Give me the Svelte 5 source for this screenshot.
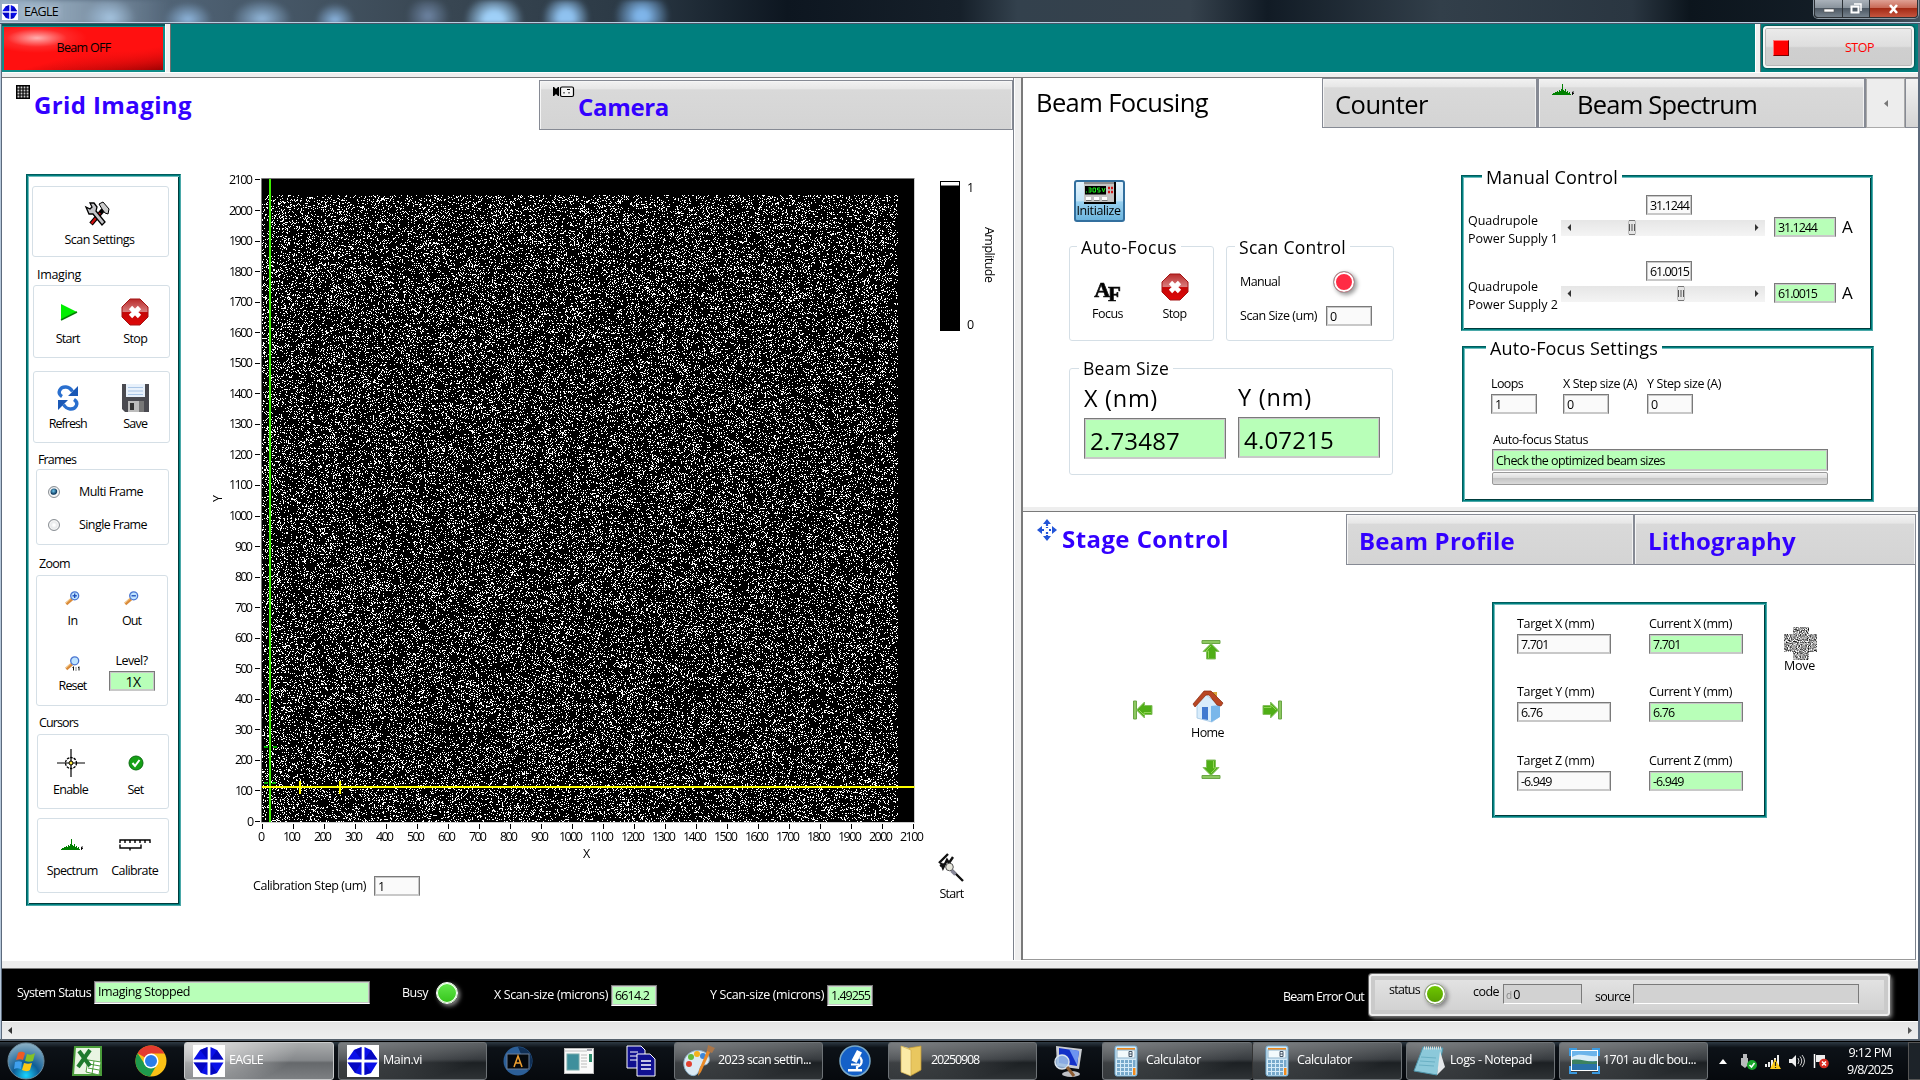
<script>
  import { onMount } from 'svelte';

  // Tightens or loosens tracking so a caption fills the given width.
  function fit(node, width) {
    if (!width) return;
    const style = getComputedStyle(node);
    const natural = node.getBoundingClientRect().width - parseFloat(style.paddingLeft) - parseFloat(style.paddingRight);
    node.style.letterSpacing = `${(width - natural) / node.textContent.length}px`;
  }

  let canvas;
  onMount(() => {
    const ctx = canvas.getContext('2d');
    const w = canvas.width;
    const h = canvas.height;
    ctx.fillStyle = '#000';
    ctx.fillRect(0, 0, w, h);
    let seed = 20250908;
    const rnd = () => {
      seed = (seed + 0x6d2b79f5) | 0;
      let r = Math.imul(seed ^ (seed >>> 15), 1 | seed);
      r = (r + Math.imul(r ^ (r >>> 7), 61 | r)) ^ r;
      return ((r ^ (r >>> 14)) >>> 0) / 4294967296;
    };
    ctx.fillStyle = '#fff';
    for (let y = 16; y < h; y++) {
      for (let x = 0; x < 636; x++) {
        if (rnd() < 0.17) ctx.fillRect(x, y, 1, 1);
      }
    }
  });

  const ticks = Array.from({ length: 22 }, (_, i) => i);
  const axes = ['X', 'Y', 'Z'];
  const stageValues = ['7.701', '6.76', '-6.949'];
  const supplies = [
    { n: 1, value: '31.1244', thumb: 67 },
    { n: 2, value: '61.0015', thumb: 116 },
  ];
</script>

{#snippet t(text, w, cls = '')}<span class="t {cls}" use:fit={w}>{text}</span>{/snippet}

{#snippet stopIcon()}
  <svg width="28" height="28" viewBox="0 0 28 28">
    <defs><linearGradient id="sg" x1="0" y1="0" x2="0" y2="1"><stop offset="0" stop-color="#b92a2a" /><stop offset=".5" stop-color="#d98080" /><stop offset=".52" stop-color="#c40808" /><stop offset="1" stop-color="#e00808" /></linearGradient></defs>
    <path d="M9 1h10l8 8v10l-8 8H9l-8-8V9z" fill="url(#sg)" stroke="#a31515" />
    <path d="M9.5 9.5l9 9M18.500 9.500l-9 9" stroke="#fff" stroke-width="4.600" />
  </svg>
{/snippet}

{#snippet eagle(s)}
  <svg width={s} height={s} viewBox="0 0 32 32">
    <rect width="32" height="32" fill="#fff" />
    <path d="M14.500 2v12.500H0.500L7 5zM17.500 2L24 5l6.500 9.500H17.500zM0.500 17.500h14V30L8 28zM17.500 17.500H30.500L24 28l-6.500 2z" fill="#0a10e8" />
    <path d="M14.500 2v12.500L7 5zM24 5l6.500 9.500H17.500zM0.500 17.500h14L8 28zM17.500 17.500L24 28l-6.500 2z" fill="#0000a8" opacity=".6" />
  </svg>
{/snippet}

{#snippet spectrum()}
  <svg width="22" height="12" viewBox="0 0 22 12">
    <path d="M0 11v-1h1v-1h2V8h2V7h1v1h1V6h1v1h1V5h1V0h1v6h1v1h1V5h1v3h1V7h1v2h1V8h1v2h1v1z" fill="#008000" />
    <path d="M20.500 11V8h1.500M20 9.500h2" stroke="#000" fill="none" stroke-width=".9" />
  </svg>
{/snippet}

{#snippet magnifier(kind)}
  <svg width="16" height="15" viewBox="0 0 16 15">
    <path d="M1.200 13L7 8" stroke="#d98a3a" stroke-width="3" /><path d="M1 12L6 7.500" stroke="#f6cf8c" />
    <circle cx="9.700" cy="4.800" r="4" fill="#bfe4ff" stroke="#4a74d0" stroke-width="1.300" />
    {#if kind !== 'reset'}<path d="M7.500 4.800h4.400" stroke="#1c48b8" stroke-width="1.300" />{/if}
    {#if kind === 'in'}<path d="M9.700 2.600v4.400" stroke="#1c48b8" stroke-width="1.300" />{/if}
    {#if kind === 'reset'}<path d="M8.500 10.500v4M7.500 11.500h1M11 11.500v1M11 13.500v1M14 10.500v4M13 11.500h1" stroke="#111" />{/if}
  </svg>
{/snippet}

{#snippet arrow(dir)}
  <svg width="22" height="22" viewBox="0 0 22 22" class="arr {dir}">
    <path d="M2 1.500h18v3H2z" fill="#8cc860" stroke="#6aa545" />
    <path d="M11 4.500l8 8h-3.500v7.500h-9v-7.500H3z" fill="#4fae16" stroke="#86bf60" /><path d="M11 7l-5 5h2.500v7" stroke="#8fd355" fill="none" />
  </svg>
{/snippet}

{#snippet calc()}
  <svg width="24" height="32" viewBox="0 0 24 32">
    <rect x="1" y="1" width="22" height="30" rx="2" fill="#d5ebf8" stroke="#6fa9cf" />
    <rect x="3" y="3" width="18" height="2" fill="#f08a1d" /><rect x="3" y="5" width="18" height="8" fill="#f3fafc" stroke="#8fb4cc" />
    <path d="M15 6.500h3v5h-3zM15 9h3" stroke="#456" fill="none" />
    {#each [16, 20, 24, 28] as y}{#each [3, 7, 11, 15] as x}<rect {x} y={y - 1} width="3" height="3" fill="#77a9cb" />{/each}{/each}
    <path d="M19 15h2.500v7H19z" fill="#77a9cb" /><path d="M19 23h2.500v7H19z" fill="#f08a1d" />
  </svg>
{/snippet}

<div class="screen">
  <header class="titlebar">
    <div class="blobs"></div>
    <div class="caption">{@render eagle(16)}{@render t('EAGLE', 34)}</div>
    <div class="winbtns">
      <span class="wb min"><svg width="14" height="12"><rect x="2" y="6" width="10" height="3" fill="#fff" stroke="#555" stroke-width=".6" /></svg></span>
      <span class="wb max"><svg width="14" height="13"><path d="M5 2h7v7" fill="none" stroke="#fff" stroke-width="1.500" /><rect x="2.500" y="4.500" width="7" height="6" fill="none" stroke="#fff" stroke-width="2" /></svg></span>
      <span class="wb close"><svg width="14" height="12"><path d="M3 2l7 8M10 2L3 10" stroke="#fff" stroke-width="2.600" /></svg></span>
    </div>
  </header>

  <div class="window">
    <div class="toolbar">
      <div class="off-cell"><button class="beam-off">{@render t('Beam OFF', 54)}</button></div>
      <i class="vsplit"></i>
      <div class="teal"></div>
      <i class="vsplit"></i>
      <div class="stop-cell"><button class="stop"><i></i>{@render t('STOP', 29)}</button></div>
    </div>
    <i class="hsplit"></i>

    <main>
      <section class="left">
        <div class="tabs">
          <div class="tab active gi">
            <svg width="14" height="14" viewBox="0 0 14 14"><path d="M.75.750h12.500v12.500H.750z" fill="#ccc" stroke="#000" stroke-width="1.500" /><path d="M4 0v14M7 0v14M10 0v14M0 4h14M0 7h14M0 10h14" stroke="#000" stroke-width="1.200" /></svg>
            {@render t('Grid Imaging', 158, 'big')}
          </div>
          <div class="tab cam">
            <svg width="22" height="12" viewBox="0 0 22 12"><path d="M0 1h1l2 2 2-2h1v9H5L3 8l-2 2H0z" fill="#000" /><rect x="7.500" y="1" width="13" height="9.500" rx="1.500" fill="#f4f4f4" stroke="#000" stroke-width="1.200" /><path d="M11 6v1.500M14 3.500h3M16 6v1.500" stroke="#000" /></svg>
            {@render t('Camera', 91, 'big')}
          </div>
        </div>
        <div class="left-body">
          <aside class="teal-box side">
            <div class="box b1">
              <svg width="26" height="26" viewBox="0 0 26 26"><path d="M6 23L18 9" stroke="#000" stroke-width="4.500" /><path d="M6.500 22.500L15 12" stroke="#d01010" stroke-width="2.400" /><path d="M14 3l4-2 6 7-1 5-3-1-3-4z" fill="#ccc" stroke="#000" /><path d="M1 6l4 2 2-2-2-4 4 0 3 4-1 4 9 11-3 3-9-11-4 0z" fill="#c4c4c8" stroke="#000" stroke-width="1.300" /></svg>
              {@render t('Scan Settings', 70)}
            </div>
            <div class="cap c1">{@render t('Imaging', 44)}</div>
            <div class="box b2">
              <div class="it"><span class="ic"><svg width="18" height="18" viewBox="0 0 18 18"><path d="M2 1v16l16-8z" fill="#00ef00" /><path d="M2 17L18 9" stroke="#067a06" stroke-width="1.500" /></svg></span>{@render t('Start', 24)}</div>
              <div class="it"><span class="ic">{@render stopIcon()}</span>{@render t('Stop', 24)}</div>
            </div>
            <div class="box b3">
              <div class="it"><span class="ic"><svg width="22" height="28" viewBox="0 0 22 28"><g fill="none" stroke="#2a6fce" stroke-width="3.400"><path d="M5 12.500C-.5 9 3 2.500 9 3c3 .2 5 2 6.500 4.500" /><path d="M17 15.500c5.500 3.500 2 10-4 9.500-3-.2-5-2-6.500-4.500" /></g><path d="M21 2v10H11zM1 26V16h10z" fill="#1a58b6" /></svg></span>{@render t('Refresh', 38)}</div>
              <div class="it"><span class="ic"><svg width="29" height="30" viewBox="0 0 29 30"><path d="M1 1h27v28H4l-3-3z" fill="#4a4a50" /><path d="M5 1h19v13H5z" fill="#e8f1fb" /><path d="M7 4.500h15M7 8h15M7 11.500h15" stroke="#aac6e6" stroke-width="1.200" /><path d="M7 18h16v11H7z" fill="#bcbcbc" /><path d="M9 20h4v7H9z" fill="#333" /><path d="M18 18h5v11h-5z" fill="#777" /></svg></span>{@render t('Save', 24)}</div>
            </div>
            <div class="cap c2">{@render t('Frames', 38)}</div>
            <div class="box b4">
              <div class="radio"><i class="on"></i>{@render t('Multi Frame', 64)}</div>
              <div class="radio r2"><i></i>{@render t('Single Frame', 68)}</div>
            </div>
            <div class="cap c3">{@render t('Zoom', 31)}</div>
            <div class="box b5">
              <div class="it"><span class="ic">{@render magnifier('in')}</span>{@render t('In', 10)}</div>
              <div class="it"><span class="ic">{@render magnifier('out')}</span>{@render t('Out', 19)}</div>
              <div class="it"><span class="ic">{@render magnifier('reset')}</span>{@render t('Reset', 28)}</div>
              <div class="it lv">{@render t('Level?', 32)}<span class="field green lvl">{@render t('1X', 15)}</span></div>
            </div>
            <div class="cap c4">{@render t('Cursors', 39)}</div>
            <div class="box b6">
              <div class="it"><span class="ic"><svg width="28" height="28" viewBox="0 0 28 28"><path d="M0 14h28M14 0v28" stroke="#000" stroke-width="1.200" /><circle cx="14" cy="14" r="5.500" fill="none" stroke="#000" stroke-width="1.300" stroke-dasharray="2.500 1" /><circle cx="14" cy="14" r="2" fill="#ffe93a" stroke="#000" /></svg></span>{@render t('Enable', 35)}</div>
              <div class="it"><span class="ic"><svg width="16" height="16" viewBox="0 0 16 16"><circle cx="8" cy="8" r="7" fill="#15a015" stroke="#0a6d10" /><path d="M4.500 8l2.500 3 4.500-6" fill="none" stroke="#fff" stroke-width="2" /></svg></span>{@render t('Set', 16)}</div>
            </div>
            <div class="box b7">
              <div class="it"><span class="ic">{@render spectrum()}</span>{@render t('Spectrum', 51)}</div>
              <div class="it"><span class="ic"><svg width="32" height="12" viewBox="0 0 32 12"><path d="M1 4V1h30v3M6 1v3M11 1v3M16 1v3M21 1v3M26 1v3M1 5.500V9h21V5.500M11 9v2.500" fill="none" stroke="#000" stroke-width="1.400" /></svg></span>{@render t('Calibrate', 47)}</div>
            </div>
          </aside>

          <div class="plot">
            <div class="stack">
              <canvas bind:this={canvas} width="653" height="643"></canvas>
              <svg width="810" height="692" viewBox="200 168 810 692">
                <path d="M261.500 822V178.500H914.500" fill="none" stroke="#777" />
                <path d="M261 822.500H915M914.500 179v643" fill="none" stroke="#ccc" />
                {#each ticks as i}
                  <path d="M255 {Math.round(821 - i * 30.55) + 0.5}h5M{Math.round(262 + i * 31) + 0.5} 824v5" stroke="#000" />
                  <text x={253 - (i === 0 ? 6 : i < 10 ? 18 : 24)} y={825.5 - i * 30.55} textLength={i === 0 ? 6 : i < 10 ? 18 : 24}>{i * 100}</text>
                  <text x={261 + i * 31 - (i === 0 ? 3 : i < 10 ? 9 : 12)} y="841" textLength={i === 0 ? 6 : i < 10 ? 18 : 24}>{i * 100}</text>
                {/each}
                <path d="M270 179v643" stroke="#3cf000" stroke-width="2" />
                <path d="M264 747h4M273 747h4M264 783h4M272 783h4" stroke="#00e000" stroke-width="1.500" />
                <path d="M262 787H914.500" stroke="#ff0" stroke-width="2" />
                <path d="M300 781v13M340 781v13" stroke="#ff0" stroke-width="2" />
                <text x="583" y="858" font-size="12">X</text>
                <text transform="translate(222 502) rotate(-90)" font-size="12">Y</text>
                <rect x="940" y="181" width="20" height="150" /><rect x="941" y="182" width="18" height="3.500" fill="#fff" />
                <text x="967" y="192">1</text><text x="967" y="329">0</text>
                <text transform="translate(985 227) rotate(90)" textLength="56">Amplitude</text>
              </svg>
            </div>
            <div class="under">
              {@render t('Calibration Step (um)', 113)}
              <span class="field calf">1</span>
              <div class="it st">
                <svg width="27" height="30" viewBox="0 0 27 30"><path d="M1 10l9-9M2 13l4-2M3 10l2 5 4-8 2 3 4-6M12 15l13 13" stroke="#111" stroke-width="2.400" fill="none" /><circle cx="11.500" cy="14" r="3.800" fill="#e6e6dc" stroke="#555" /><path d="M13.500 17.500l4 4" stroke="#889" stroke-width="3.500" /></svg>
                {@render t('Start', 24)}
              </div>
            </div>
          </div>
        </div>
      </section>
      <i class="msplit"></i>

      <section class="right">
        <div class="tabs rt">
          <div class="tab active bf">{@render t('Beam Focusing', 172, 'reg')}</div>
          <div class="tab co">{@render t('Counter', 93, 'reg')}</div>
          <div class="tab bs">{@render spectrum()}{@render t('Beam Spectrum', 180, 'reg')}</div>
          <div class="nav"><svg width="4" height="7"><path d="M4 0v7L0 3.500z" fill="#777" /></svg></div>
          <div class="stub"></div>
        </div>
        <div class="focus">
          <div class="fcol">
            <button class="init">
              <svg width="32" height="22" viewBox="0 0 32 22"><rect width="32" height="22" fill="#000" /><rect x="0" y="0" width="30" height="20" fill="#c4c4c4" /><path d="M0 1h30" stroke="#555" /><rect x="1" y="4" width="21" height="8.500" fill="#000" /><path d="M2 10h1M4.500 6h2.500v4H4.500M4.500 8h2M9 6h2.500v4H9zM16 6h-2.500v2H16v2h-2.500M18 6l1.500 4L21 6" stroke="#18f018" fill="none" /><path d="M24 6h2M27 6h2M24 10h2M27 10h2" stroke="#d01818" stroke-width="2.500" /><path d="M2 16.500h5M10 16.500h5M18 16.500h5" stroke="#fff" stroke-width="3" /><path d="M2 18.500h5.500M10 18.500h5.500M18 18.500h5.500" stroke="#777" /></svg>
              {@render t('Initialize', 44)}
            </button>
            <div class="groups">
              <div class="group af">
                {@render t('Auto-Focus', 96, 'legend')}
                <div class="row">
                  <div class="it"><span class="ic afi"><b>A</b><b>F</b></span>{@render t('Focus', 31)}</div>
                  <div class="it"><span class="ic">{@render stopIcon()}</span>{@render t('Stop', 24)}</div>
                </div>
              </div>
              <div class="group sc">
                {@render t('Scan Control', 107, 'legend')}
                <div class="man">{@render t('Manual', 40)}<i class="led red"></i></div>
                <div class="siz">{@render t('Scan Size (um)', 77)}<span class="field">0</span></div>
              </div>
            </div>
            <div class="group bz">
              {@render t('Beam Size', 86, 'legend')}
              <div class="sizes">
                <div>{@render t('X (nm)', 74, 'nm')}<span class="field green bigf">{@render t('2.73487', 90)}</span></div>
                <div class="y">{@render t('Y (nm)', 74, 'nm')}<span class="field green bigf">{@render t('4.07215', 90)}</span></div>
              </div>
            </div>
          </div>
          <div class="scol">
            <div class="teal-box manual">
              {@render t('Manual Control', 132, 'legend')}
              {#each supplies as s}
                <div class="quad">
                  <div class="ql">{@render t('Quadrupole', 70)}{@render t(`Power Supply ${s.n}`, 90)}</div>
                  <div class="qs">
                    <span class="field">{@render t(s.value, 39)}</span>
                    <div class="slider">
                      <svg width="204" height="16">
                        <path d="M10 4v7L6.500 7.500zM194 4v7l3.500-3.500z" fill="#333" />
                        <g transform="translate({s.thumb} 0)"><rect x=".5" y=".5" width="7" height="14" rx="1.500" fill="#e4e4e4" stroke="#bbb" /><path d="M1 .5h6M1 14.500h6" stroke="#777" /><path d="M1.500 4v7M4 4v7M6.500 4v7" stroke="#555" /></g>
                      </svg>
                    </div>
                  </div>
                  <span class="field green qf">{@render t(s.value, 39)}</span>
                  <span class="amp">A</span>
                </div>
              {/each}
            </div>
            <div class="teal-box afs">
              {@render t('Auto-Focus Settings', 168, 'legend')}
              <div class="steps">
                <div>{@render t('Loops', 32)}<span class="field">1</span></div>
                <div>{@render t('X Step size (A)', 74)}<span class="field">0</span></div>
                <div>{@render t('Y Step size (A)', 74)}<span class="field">0</span></div>
              </div>
              <div class="status">
                {@render t('Auto-focus Status', 95)}
                <span class="field green">{@render t('Check the optimized beam sizes', 169)}</span>
                <div class="prog"></div>
              </div>
            </div>
          </div>
        </div>
        <i class="hsplit inner"></i>
        <div class="tabs lower">
          <div class="tab active sg">
            <svg width="20" height="22" viewBox="0 0 20 22"><path d="M10 0l4 5h-8zM10 22l4-5h-8zM0 11l5-4v8zM20 11l-5-4v8z" fill="#2355d8" /><path d="M10 5v4M10 13v4M5 11h3M12 11h3" stroke="#2355d8" stroke-width="2.200" stroke-dasharray="2 1" /></svg>
            {@render t('Stage Control', 167, 'big')}
          </div>
          <div class="tab bp">{@render t('Beam Profile', 156, 'big')}</div>
          <div class="tab li">{@render t('Lithography', 148, 'big')}</div>
        </div>
        <div class="stage">
          <div class="pad">
            <span class="up">{@render arrow('u')}</span>
            <span class="lf">{@render arrow('l')}</span>
            <div class="home it">
              <svg width="34" height="34" viewBox="0 0 34 34"><path d="M21 3h5v11h-5z" fill="#d9a63c" /><path d="M6 14l8-9 14 11v12l-7 5-15-4z" fill="#d8ecfb" stroke="#9fc4e2" stroke-width=".8" /><path d="M20 17l9-1v12l-9 5z" fill="#79b7ea" /><path d="M11 18h6v13l-6-1z" fill="#4079cf" /><path d="M2 15L13 2h7l12 12-2 3-4-1-8-10-3 0L4 18z" fill="#b94724" stroke="#862a10" stroke-width=".7" /></svg>
              {@render t('Home', 33)}
            </div>
            <span class="rg">{@render arrow('r')}</span>
            <span class="dn">{@render arrow('d')}</span>
          </div>
          <div class="teal-box targets">
            {#each axes as a, i}
              <div class="tg">{@render t(`Target ${a} (mm)`, 77)}<span class="field">{@render t(stageValues[i])}</span></div>
              <div class="tg">{@render t(`Current ${a} (mm)`, 83)}<span class="field green">{@render t(stageValues[i])}</span></div>
            {/each}
          </div>
          <div class="it move">
            <svg width="34" height="33" viewBox="0 0 34 33">
              <defs><filter id="grain" x="0" y="0" width="1" height="1" color-interpolation-filters="sRGB"><feTurbulence type="fractalNoise" baseFrequency=".9" numOctaves="1" seed="3" /><feColorMatrix type="matrix" values="2.200 0 0 0 -.5  2.200 0 0 0 -.5  2.200 0 0 0 -.5  0 0 0 0 1" /><feComposite in2="SourceGraphic" operator="in" /></filter></defs>
              <path d="M9 0h16v7h8v18h-8v8H9v-8H0V7h9z" fill="#aaa" filter="url(#grain)" />
            </svg>
            {@render t('Move', 31)}
          </div>
        </div>
      </section>
    </main>
    <i class="hsplit bot"></i>

    <footer class="bar">
      {@render t('System Status', 74, 'ss')}
      <span class="field green ssf">{@render t('Imaging Stopped', 92)}</span>
      {@render t('Busy', 26, 'bu')}
      <i class="led busy"></i>
      {@render t('X Scan-size (microns)', 114, 'xs')}
      <span class="field green sf">{@render t('6614.2', 34)}</span>
      {@render t('Y Scan-size (microns)', 114, 'ys')}
      <span class="field green sf">{@render t('1.49255', 39)}</span>
      {@render t('Beam Error Out', 81, 'be')}
      <div class="cluster">
        {@render t('status', 31, 's1')}<i class="led ok"></i>
        {@render t('code', 26, 's2')}<span class="field grey f1"><em>d</em>0</span>
        {@render t('source', 35, 's3')}<span class="field grey f2"></span>
      </div>
    </footer>
    <div class="scroll"><svg width="4" height="7"><path d="M4 0v7L0 3.500z" fill="#333" /></svg><svg width="4" height="7"><path d="M0 0v7l4-3.500z" fill="#555" /></svg></div>
  </div>

  <nav class="taskbar">
    <svg class="i orb" width="38" height="38" viewBox="0 0 38 38"><defs><radialGradient id="ob" cx=".5" cy=".9" r=".9"><stop offset="0" stop-color="#19d4ff" /><stop offset=".4" stop-color="#0e5d96" /><stop offset="1" stop-color="#8fb2c6" /></radialGradient></defs><circle cx="19" cy="19" r="18" fill="url(#ob)" stroke="#6d8da0" /><path d="M11 11c3-2 5-1 7 0l-2 7c-2-1-4-1-7 0z" fill="#ef5a24" /><path d="M20 12c3 1 5 1 8-1l-2 8c-3 1-5 1-8 0z" fill="#84c225" /><path d="M8 20c3-1 5-1 7 0l-1 7c-3-1-5-1-7 0z" fill="#3fa0ee" /><path d="M17 21c3 1 5 1 8 0l-2 7c-3 2-5 1-8 0z" fill="#fdc815" /></svg>
    <svg class="i xl" width="30" height="30" viewBox="0 0 30 30"><path d="M2 1h26v28H0z" fill="#e9f5e3" stroke="#4a9c3a" stroke-width="2" /><path d="M15 14l13 2-2 13-13-3z" fill="#fff" stroke="#4a9c3a" /><path d="M16 18l11 2M15 22l11 2M21 15l-2 13" stroke="#4a9c3a" /><path d="M6 5l11 15M17 4L5 21" stroke="#1f7a2e" stroke-width="4" /></svg>
    <svg class="i ch" width="32" height="32" viewBox="0 0 32 32"><circle cx="16" cy="16" r="15.500" fill="#fbc116" /><path d="M16 16L2.600 8.200A15.500 15.500 0 0 1 29.500 8.500H16z" fill="#e33b2e" /><path d="M2.600 8.200A15.500 15.500 0 0 0 15 31.500L22 19.500 10 19.500z" fill="#1e9a4c" /><circle cx="16" cy="16" r="7.500" fill="#fff" /><circle cx="16" cy="16" r="6" fill="#2b7de9" /></svg>
    <div class="tb act k1">{@render eagle(32)}{@render t('EAGLE', 34)}</div>
    <div class="tb k2">{@render eagle(32)}{@render t('Main.vi', 39)}</div>
    <svg class="i ai" width="30" height="30" viewBox="0 0 30 30"><circle cx="15" cy="15" r="14.500" fill="#2c5f98" /><path d="M15 1a14 14 0 0 1 10 24z" fill="#102f55" /><rect x="4" y="8" width="22" height="15" fill="#05080c" stroke="#6a7f99" /><path d="M11 21l4-11 4 11M12.500 17h5" fill="none" stroke="#f0a030" stroke-width="1.500" /></svg>
    <svg class="i ap" width="30" height="26" viewBox="0 0 30 26"><rect x=".5" y=".5" width="29" height="25" fill="#fafafa" stroke="#bbb" /><path d="M1 3h22" stroke="#ddd" stroke-width="2" /><path d="M23 2h5" stroke="#556" /><rect x="3" y="6" width="12" height="16" fill="#3e8f9c" stroke="#7aa" /><path d="M17 7h6M17 10h6M17 13h6M17 16h6M17 19h6" stroke="#bbb" /><path d="M25 6h3v8h-3z" fill="#2c8a6c" /></svg>
    <svg class="i dc" width="30" height="32" viewBox="0 0 30 32"><path d="M1 1h14l4 4v18H1z" fill="#101090" stroke="#fff" /><path d="M4 7h8M4 11h8M4 15h8" stroke="#fff" /><path d="M11 9h13l5 5v17H11z" fill="#101090" stroke="#fff" /><path d="M15 16h10M15 20h10M15 24h10" stroke="#fff" stroke-width="1.300" /></svg>
    <div class="tb k3"><svg width="34" height="32" viewBox="0 0 34 32"><path d="M3 24C-2 12 10 3 20 6c10 3 9 14 2 14-5 0-3 5-7 9s-10 0-12-5z" fill="#dbeaf4" stroke="#8db0c8" /><circle cx="7" cy="19" r="3" fill="#e24030" /><circle cx="9" cy="12" r="3" fill="#62b83c" /><circle cx="15" cy="9" r="3" fill="#f3b21c" /><circle cx="21" cy="11" r="3" fill="#3c86d8" /><path d="M30 3L19 27l-3 4 1-6L27 1z" fill="#e98a28" /><path d="M26 0l7 3-3 5-5-2z" fill="#a9764a" /></svg>{@render t('2023 scan settin...', 93)}</div>
    <svg class="i ms" width="32" height="32" viewBox="0 0 32 32"><circle cx="16" cy="16" r="15" fill="#1460c8" stroke="#79a8c8" stroke-width="1.500" /><path d="M9 24h14v2.500H9z" fill="#fff" /><path d="M12 18.500h8v2h-8zM18 5l5 2.500-5.500 10.500-5-2.500z" fill="#fff" /><path d="M21 12c3 4 2 8-3 10v3" fill="none" stroke="#fff" stroke-width="2.200" /></svg>
    <div class="tb k4"><svg width="30" height="32" viewBox="0 0 30 32"><path d="M3 1l8 2v27l-8-3z" fill="#f6df8c" /><path d="M11 3l12-2v24l-9 5-3 0z" fill="#e9c75f" stroke="#c49c35" stroke-width=".7" /><path d="M3 1l10 4v26L3 27z" fill="#fbeaa6" stroke="#cfaa4b" stroke-width=".7" /></svg>{@render t('20250908', 48)}</div>
    <svg class="i mo" width="30" height="32" viewBox="0 0 30 32"><path d="M3 1l26 3-3 20-22-3z" fill="#c9ccd2" /><path d="M6 3l20 3-2 15-18-3z" fill="#1330c8" /><path d="M16 4l10 2-2 14z" fill="#6d94f0" /><ellipse cx="18" cy="29" rx="9" ry="3" fill="#bfc1c5" /><circle cx="9" cy="17" r="7" fill="#9fc0e8" fill-opacity=".85" stroke="#dbe4ee" stroke-width="1.500" /><path d="M14 22l7 9" stroke="#8d5c32" stroke-width="3" /></svg>
    <div class="tb k5">{@render calc()}{@render t('Calculator', 55)}</div>
    <div class="tb k6">{@render calc()}{@render t('Calculator', 55)}</div>
    <div class="tb k7"><svg width="32" height="32" viewBox="0 0 32 32"><path d="M9 2l20 1-6 27L0 26z" fill="#8cc9da" stroke="#4f93a8" /><path d="M26 6l5 16-8 8z" fill="#e5e8ea" /><path d="M7 12l15 1M6 16l15 1M5 20l15 1" stroke="#6ab0c4" /><path d="M10 3h18" stroke="#ddd" stroke-width="3" stroke-dasharray="1 1" /></svg>{@render t('Logs - Notepad', 82)}</div>
    <div class="tb k8"><svg width="31" height="26" viewBox="0 0 31 26"><rect x="2" y="2" width="27" height="21" fill="#fff" /><rect x="3" y="3" width="25" height="19" fill="#6cb4ea" /><path d="M3 9c8-5 17 0 25-1v5H3z" fill="#d9edf8" /><path d="M3 12c8-2 17 3 25 1v3H3z" fill="#3c8260" /><path d="M3 16h25v6H3z" fill="#2a72a8" /><path d="M1 8V1h7M23 1h7v7M30 18v7h-7M8 25H1v-7" fill="none" stroke="#3b9ae0" stroke-width="2" /></svg>{@render t('1701 au dlc bou...', 93)}</div>
    <div class="tray">
      <svg class="y1" width="8" height="5"><path d="M0 5h8L4 0z" fill="#fff" /></svg>
      <svg class="y2" width="16" height="17" viewBox="0 0 16 17"><path d="M2 1h4v4h1v7L4 15 0 12V5h2z" fill="#b9bbbd" /><circle cx="11" cy="12" r="5" fill="#17a52a" /><path d="M8.500 12l2 2 3-4" stroke="#fff" stroke-width="1.500" fill="none" /></svg>
      <svg class="y3" width="16" height="15" viewBox="0 0 16 15"><path d="M1 13v-3M4 13V8M7 13V6M10 13V4M13 13V1" stroke="#eee" stroke-width="2" /><path d="M10 5l6 10H5z" fill="#fccb1b" /><path d="M10.500 8v4M10.500 13v1" stroke="#222" stroke-width="1.200" /></svg>
      <svg class="y4" width="16" height="14" viewBox="0 0 16 14"><path d="M0 5h3l4-4v12L3 9H0z" fill="#eee" /><path d="M9 4q2 3 0 6M11 2.500q3.500 4.500 0 9M13 1q5 6 0 12" stroke="#ccc" fill="none" /></svg>
      <svg class="y5" width="16" height="16" viewBox="0 0 16 16"><path d="M1.500 1v14" stroke="#fff" stroke-width="1.500" /><path d="M3 2h9v7H3z" fill="#eee" /><circle cx="11" cy="10.500" r="4.800" fill="#d92b20" /><path d="M9 8.500l4 4M13 8.500l-4 4" stroke="#fff" stroke-width="1.500" /></svg>
      <div class="clock">{@render t('9:12 PM', 43)}{@render t('9/8/2025', 46)}</div>
      <div class="desk"></div>
    </div>
  </nav>
</div>

<style>
  :global(body) { margin: 0; overflow: hidden; }
  .screen, .screen :global(*) { box-sizing: border-box; }
  .screen { width: 1920px; height: 1080px; display: flex; flex-direction: column; background: #fff; color: #000; font: 12.5px/16px "Open Sans", "Noto Sans", sans-serif; overflow: hidden; }
  svg { display: block; flex: none; overflow: visible; }
  i { display: block; font-style: normal; flex: none; }
  button { font: inherit; border: 0; padding: 0; margin: 0; color: inherit; }
  .t { display: block; width: max-content; white-space: pre; flex: none; }

  .titlebar { height: 24px; flex: none; display: grid; grid-template-columns: 1fr auto; background: linear-gradient(90deg, #8fa3b8 0, #5d7186 3%, #4a5c6d 12%, #3a4854 22%, #2b3945 33%, #0d1620 41%, #16202a 50%, #33414d 53%, #36424d 62%, #111b25 66%, #323f4a 75%, #2a3641 85%, #0c151d 88%, #131d26 95%, #45525e 100%); overflow: hidden; }
  .titlebar::after { content: ""; grid-area: 1 / 1 / 2 / 3; align-self: end; height: 2px; background: linear-gradient(#b9cde0 50%, #45576a 50%); z-index: 1; }
  .titlebar > * { grid-row: 1; }
  .blobs { grid-column: 1 / 3; filter: blur(2px); background: radial-gradient(ellipse 26px 20px at 110px 18px, #a5c4e0, transparent), radial-gradient(ellipse 24px 18px at 188px 20px, #90b8e0, transparent), radial-gradient(ellipse 30px 20px at 262px 19px, #93b9dd, transparent), radial-gradient(ellipse 20px 18px at 335px 21px, #8fbbe8, transparent), radial-gradient(ellipse 22px 20px at 428px 16px, #6f86a5, transparent), radial-gradient(ellipse 30px 26px at 494px 20px, #9fd0f8 30%, transparent), radial-gradient(ellipse 24px 24px at 566px 18px, #8fc2f0 30%, transparent), radial-gradient(ellipse 28px 26px at 642px 16px, #7fb5ea 20%, transparent), linear-gradient(90deg, #9db4c9 0, #8ea3b6 60px, transparent 170px); }
  .caption { grid-column: 1; display: flex; align-items: center; gap: 6px; padding: 1px 0 1px 2px; position: relative; text-shadow: 0 0 6px #c8d8e8, 0 0 8px #c8d8e8; }
  .winbtns { grid-column: 2; display: flex; height: 18px; margin-right: 2px; border: 1px solid #2c3136; border-top: 0; border-radius: 0 0 4px 4px; position: relative; box-shadow: 0 0 0 1px #8d99a3; overflow: hidden; }
  .wb { display: grid; place-items: center; background: linear-gradient(#aab2ba, #8a949d 45%, #4d5863 50%, #77838e); border-right: 1px solid #2c3136; }
  .min { width: 28px; } .max { width: 27px; } .close { width: 47px; border: 0; background: linear-gradient(#dfa094, #c96a58 45%, #a32a15 50%, #c6553f); }

  .window { height: 1017px; flex: none; display: flex; flex-direction: column; padding: 0 2px; background: linear-gradient(90deg, #b5c7da 0 1px, #5c6a7c 1px 2px, #fff 2px 1918px, #5c6a7c 1918px); border-bottom: 2px solid #55606c; }
  .toolbar { display: flex; height: 48px; background: #007f7e; flex: none; }
  .off-cell { width: 163px; padding: 1px 2px 2px 2px; background: #118c88; border-top: 2px solid #045a5c; }
  .beam-off { display: grid; place-items: center; width: 159px; height: 43px; background: radial-gradient(ellipse 50px 15px at 33px 11px, #ffb0b0, #ff404080 60%, transparent), radial-gradient(ellipse at 75% 20%, #ff1010 30%, transparent 80%), linear-gradient(165deg, #ff1010 55%, #900000); padding-bottom: 2px; }
  .vsplit { width: 6px; background: #f0f0f0; border-right: 1px solid #707070; border-left: 1px solid #fff; }
  .teal { flex: 1; }
  .stop-cell { width: 157px; padding: 2px 4px 4px 2px; }
  .stop { display: flex; align-items: center; width: 151px; height: 42px; padding-top: 1px; border: 2px solid #f6f6f6; border-radius: 4px; box-shadow: 0 0 2px 1px #054b4b, inset 0 0 0 1px #b8b8b8; background: linear-gradient(#ebebeb, #dedede 48%, #cfcfcf 52%, #cdcdcd); color: #f00; }
  .stop i { width: 16px; height: 16px; background: #f00; border: 1px solid #f77; border-right-color: #700; border-bottom-color: #700; margin: 0 56px 0 8px; }
  .hsplit { height: 6px; background: linear-gradient(#fff 0 1px, #eee 1px 5px, #7a7a7a 5px); }

  main { display: flex; height: 882px; flex: none; }
  .left { width: 1012px; border-right: 1px solid #7c828c; }
  .tabs { display: flex; height: 52px; }
  .tab { display: flex; }
  .tab:not(.active) { background: linear-gradient(#f2f2f2, #e6e6e6 17%, #d9d9d9 18%, #d4d4d4); border: 1px solid #868a94; box-shadow: inset 1px 1px 0 #f6f6f6, inset -1px 0 0 #f2f2f2; }
  .big { font: bold 24px/30px "Open Sans", "Noto Sans", sans-serif; color: #3300ff; }
  .reg { font-size: 25.5px; line-height: 32px; }
  .gi { width: 537px; padding: 7px 0 0 14px; gap: 4px; } .gi .big { margin-top: 5px; }
  .cam { flex: 1; margin-top: 2px; padding: 5px 0 0 13px; gap: 3px; } .cam .big { margin-top: 6px; }
  .left-body { display: flex; padding-left: 24px; }

  .teal-box { border: 1px solid #005c5c; border-right-color: #4aa8a8; border-bottom-color: #4aa8a8; padding: 2px; box-shadow: inset 0 0 0 1px #008080, inset 2px 2px 0 #70bcbc, inset -2px -2px 0 #003c3c; }
  .box, .group { border: 1px solid #d5dfe6; border-radius: 3px; }
  .side { width: 155px; height: 732px; margin-top: 44px; display: flex; flex-direction: column; align-items: flex-start; padding: 11px 0 0 5px; flex: none; }
  .box { display: grid; grid-template-columns: 1fr 1fr; flex: none; }
  .it { display: flex; flex-direction: column; align-items: center; }
  .ic { display: grid; place-items: center; flex: none; }
  .cap { height: 16px; flex: none; margin-left: 5px; }
  .b1 { width: 137px; height: 71px; margin-left: 0; grid-template-columns: 1fr; justify-items: center; align-content: start; padding-top: 14px; gap: 5px; }
  .b1 svg { margin-left: -5px; }
  .b1 .t { margin-left: -2px; }
  .c1 { margin-top: 10px; }
  .b2 { width: 137px; height: 73px; margin: 2px 0 0 1px; padding-top: 12px; }
  .b2 .ic { height: 28px; margin-bottom: 5px; }
  .b3 { width: 137px; height: 72px; margin: 13px 0 0 1px; padding-top: 11px; }
  .b3 .ic { height: 30px; margin-bottom: 3px; }
  .c2 { margin-top: 9px; margin-left: 6px; }
  .b4 { width: 133px; height: 76px; margin: 1px 0 0 4px; grid-template-columns: 1fr; align-content: start; padding: 14px 0 0 11px; gap: 17px; }
  .radio { display: flex; gap: 19px; align-items: center; }
  .radio i { width: 12px; height: 12px; border-radius: 50%; border: 1px solid #8a8f94; background: radial-gradient(#fff 10%, #cfd3d6 80%); box-shadow: inset 0 0 0 1.500px #f4f4f4; }
  .radio i.on { background: radial-gradient(circle at 45% 40%, #6fc8f0, #0e3b60 40%, #fff 55%, #d5d8da); }
  .c3 { margin-top: 11px; margin-left: 7px; }
  .b5 { width: 132px; height: 131px; margin: 3px 0 0 4px; padding: 15px 6px 0 6px; grid-template-rows: 65px auto; align-content: start; }
  .b5 .ic { height: 15px; margin-bottom: 7px; }
  .lv { margin-top: -3px; } .lvl { width: 48px; height: 24px; margin-top: 2px; justify-content: center; padding: 1px 0 0; font-size: 14px; }
  .c4 { margin-top: 9px; margin-left: 7px; }
  .b6 { width: 132px; height: 75px; margin: 3px 0 0 5px; padding-top: 14px; }
  .b6 .ic { height: 28px; margin-bottom: 5px; }
  .b7 { width: 132px; height: 75px; margin: 9px 0 0 5px; padding: 20px 2px 0 3px; }
  .b7 .ic { height: 12px; margin-bottom: 12px; }

  .field { display: flex; align-items: center; flex: none; background: #fafafa; border: 1px solid #7a7a7a; border-bottom-color: #c8c8c8; box-shadow: inset 0 0 0 1px #c8c8c8; height: 20px; width: 46px; padding: 1px 0 0 3px; }
  .green { background: #b8ffb8; }

  .plot { margin-left: 19px; padding-top: 38px; width: 810px; }
  .stack { display: grid; } .stack > * { grid-area: 1 / 1; }
  canvas { margin: 11px 0 0 62px; display: block; }
  text { font-size: 12.5px; }
  .under { display: flex; padding-left: 53px; height: 50px; }
  .under > .t { margin: 18px 8px 0 0; }
  .calf { margin-top: 16px; }
  .st { margin: -7px 0 0 518px; } .st .t { margin-top: 3px; }

  .msplit { width: 9px; background: linear-gradient(90deg, #fff 0 1px, #eee 1px 7px, #7a7a7a 7px); }
  .right { width: 895px; }
  .rt { height: 50px; }
  .bf { width: 299px; padding: 8px 0 0 13px; }
  .co { width: 215px; padding: 9px 0 0 12px; }
  .bs { width: 329px; padding: 5px 0 0 13px; gap: 3px; border-left-width: 2px !important; border-right-width: 2px !important; } .bs .t { margin-top: 4px; }
  .nav { width: 39px; display: grid; place-items: center; background: #ededed; border: 1px solid #aaa; }
  .stub { width: 13px; background: linear-gradient(#f2f2f2, #d4d4d4); border: 1px solid #868a94; border-right: 0; }
  .focus { display: flex; height: 378px; padding-left: 46px; }
  .fcol { width: 392px; padding-top: 52px; }
  .init { display: flex; flex-direction: column; align-items: center; width: 51px; height: 42px; margin-left: 5px; border: 2px solid #326f9e; border-radius: 3px; background: linear-gradient(#e4f3fc, #c3e4f7 50%, #98d0ef 52%, #6db5de); }
  .init .t { margin: -1px 2px 0 0; }
  .groups { display: flex; gap: 12px; margin-top: 24px; }
  .legend { background: #fff; padding: 0 4px; margin: -12px 0 0 7px; font-size: 17.5px; line-height: 24px; }
  .sc .legend { margin-left: 8px; }
  .group { height: 95px; }
  .af { width: 145px; } .sc { width: 168px; } .bz { width: 324px; height: 107px; margin-top: 27px; } .bz .legend { margin: -13px 0 1px 9px; }
  .row { display: grid; grid-template-columns: 67px 67px; padding: 14px 0 0 4px; }
  .row .ic { height: 28px; margin-bottom: 5px; }
  .afi { grid-auto-flow: column; font: 700 22px/24px "Liberation Serif", serif; padding-bottom: 5px; -webkit-text-stroke: .7px #111; }
  .afi b + b { font-size: 21px; margin: 9px 0 0 -2px; }
  .led { width: 22px; height: 22px; border-radius: 50%; border: 1px solid #999; box-shadow: inset 0 0 0 2px #fff, 2px 2px 4px #0006; }
  .red { background: #ff2b44; }
  .man { display: flex; align-items: center; padding: 12px 0 0 13px; height: 34px; } .man .led { margin-left: 53px; }
  .siz { display: flex; align-items: center; padding: 13px 0 0 13px; gap: 9px; }
  .sizes { display: flex; gap: 12px; padding-left: 14px; }
  .nm { font-size: 23.5px; line-height: 32px; margin-top: 1px; margin-bottom: 4px; }
  .y { margin-top: -1px; }
  .bigf { width: 142px; height: 41px; font-size: 24px; line-height: 30px; padding: 4px 0 0 5px; }
  .scol { padding-top: 47px; }
  .manual { width: 412px; height: 156px; }
  .scol .legend { width: max-content; margin: -13px 0 0 18px; font-size: 18px; }
  .quad { display: grid; grid-template-columns: 93px 204px 71px 20px; padding: 6px 0 0 4px; height: 72px; align-items: start; }
  .quad + .quad { padding-top: 0; }
  .ql { line-height: 17.5px; padding-top: 17px; }
  .qs .field { margin-left: 85px; padding-left: 3px; }
  .slider { height: 16px; margin-top: 5px; background: linear-gradient(#e6e6e6, #f4f4f4); }
  .qf { width: 62px; margin: 22px 0 0 9px; }
  .amp { font-size: 17px; margin: 24px 0 0 6px; }
  .afs { width: 412px; height: 156px; margin: 15px 0 0 1px; }
  .scol .afs .legend { margin-left: 21px; }
  .steps { display: grid; grid-template-columns: 72px 84px auto; padding: 16px 0 0 26px; } .steps .field { margin-top: 2px; }
  .status { padding: 18px 0 0 27px; } .status .field { width: 336px; height: 22px; margin-top: 1px; } .status > .t { margin-left: 1px; }
  .prog { width: 336px; height: 13px; margin-top: 1px; border: 1px solid #999; border-radius: 2px; background: linear-gradient(#f2f2f2, #dcdcdc 45%, #c4c4c4 50%, #dadada); }
  .inner { height: 6px; margin-top: 0; }
  .lower { height: 53px; }
  .sg { width: 323px; padding: 7px 0 0 14px; gap: 5px; } .sg .big { margin-top: 5px; }
  .bp, .li { margin-top: 2px; padding: 11px 0 0 12px; } .bp { width: 288px; } .li { width: 282px; padding-left: 13px; }
  .stage { display: flex; align-items: flex-start; width: 893px; height: 395px; border-right: 1px solid #7c828c; border-bottom: 1px solid #999; }
  .pad { display: grid; grid-template-columns: 22px 107px 22px; grid-template-rows: 51px 68px 22px; margin: 74px 0 0 109px; width: 360px; }
  .pad > * { align-self: start; } .up, .home, .dn { grid-column: 2; justify-self: center; }
  .up, .dn { margin-left: 6px; } .lf { grid-area: 2 / 1; margin-top: 9px; } .home { grid-area: 2 / 2; margin-top: -1px; } .rg { grid-area: 2 / 3; margin-top: 9px; } .dn { grid-row: 3; margin-top: 0; }
  .home .t { margin-top: 2px; }
  .l { transform: rotate(-90deg); } .r { transform: rotate(90deg); } .d { transform: rotate(180deg); }
  .targets { width: 275px; height: 216px; margin-top: 37px; display: grid; grid-template-columns: 132px 94px; grid-template-rows: 68px 69px 40px; padding: 13px 0 0 24px; }
  .tg .field { width: 94px; margin-top: 2px; }
  .tg .field .t { letter-spacing: -.9px; }
  .move { margin: 62px 0 0 17px; width: 34px; } .move .t { margin: -2px 3px 0 0; }

  .bot { height: 9px; background: linear-gradient(#fff 0 1px, #eee 1px 8px, #7a7a7a 8px); }
  .bar { display: flex; height: 52px; background: #000; color: #fff; flex: none; align-items: flex-start; }
  .bar .field { color: #000; border-bottom-color: #fff; }
  .ss { margin: 16px 3px 0 15px; } .ssf { width: 276px; height: 23px; margin-top: 12px; padding-bottom: 2px; }
  .bu { margin: 16px 8px 0 32px; } .busy { margin-top: 13px; background: linear-gradient(#63e84c, #35c41b); }
  .busy.led { border-color: #fff; box-shadow: inset 0 0 0 1px #fff, 2px 2px 4px #888; }
  .xs { margin: 18px 3px 0 36px; } .ys { margin: 18px 3px 0 53px; }
  .sf { height: 21px; margin-top: 16px; padding-left: 3px; }
  .be { margin: 20px 5px 0 410px; }
  .cluster { display: flex; width: 521px; height: 42px; margin-top: 5px; background: linear-gradient(#e4e4e4, #d0d0d0); border: 2px solid #eee; border-radius: 3px; box-shadow: 0 0 0 1px #666, inset 0 0 0 4px #cacaca, 2px 2px 4px #888; color: #000; align-items: flex-start; }
  .s1 { margin: 6px 4px 0 18px; } .ok { margin-top: 7px; background: linear-gradient(#72cc00, #549a00); }
  .s2 { margin: 8px 4px 0 27px; } .s3 { margin: 13px 3px 0 13px; }
  .grey { background: #d2d2d2; box-shadow: none; margin-top: 8px; } .f1 { width: 79px; gap: 1px; padding-left: 2px; } .f1 em { font-style: normal; color: #888; font-size: 10px; } .f2 { width: 226px; }
  .scroll { display: flex; justify-content: space-between; align-items: center; height: 18px; background: linear-gradient(#e6e6e6, #eee); padding: 0 6px; border-top: 1px solid #fff; flex: none; }

  .taskbar { display: flex; flex: 1; align-items: center; background: linear-gradient(#2e3a44, #0d1218 15%, #06090d); border-top: 1px solid #000; color: #fff; }
  .taskbar .i { flex: none; }
  .orb { margin: 0 28px 0 7px; } .xl { margin-right: 32px; } .ch { margin-right: 17px; }
  .tb { display: flex; align-items: center; height: 38px; width: 149px; padding-left: 8px; border: 1px solid #6d7276; border-radius: 3px; background: radial-gradient(ellipse 190px 60px at 10% 0, #9a9c9e80, transparent 70%), linear-gradient(#5c6063, #383c40 45%, #1c2023 55%, #2e3235); flex: none; gap: 4px; }
  .tb .t { margin-top: -2px; }
  .act { background: radial-gradient(ellipse 110px 50px at 10% 0, #ddd, transparent 90%), linear-gradient(#aaacad, #85888b 48%, #65686b 55%, #7d8083); border-color: #c8cacb; width: 150px; }
  .k1 { margin-right: 4px; } .k2 { margin-right: 16px; }
  .ai { margin-right: 31px; } .ap { margin-right: 32px; } .dc { margin-right: 18px; } .k3 { margin-right: 16px; } .ms { margin-right: 17px; }
  .k3 { padding-left: 7px; gap: 2px; } .k4 { margin-right: 16px; gap: 3px; padding-left: 9px; } .mo { margin-right: 19px; }
  .k5 { width: 150px; padding-left: 11px; gap: 8px; border-right: 0; } .k6 { width: 150px; padding-left: 12px; gap: 8px; margin-right: 4px; border-left-color: #333; } .k7 { margin-right: 4px; padding-left: 7px; } .k8 { padding-left: 9px; gap: 3px; }
  .tray { display: flex; align-items: center; }
  .y1 { margin: 0 14px 0 11px; } .y2 { margin-right: 8px; } .y3 { margin-right: 8px; } .y4 { margin-right: 8px; } .y5 { margin-right: 14px; }
  .clock { display: flex; flex-direction: column; align-items: center; width: 54px; line-height: 17px; } .desk { width: 14px; height: 38px; margin-left: 11px; border: 1px solid #555; background: #1d2329; }
</style>
